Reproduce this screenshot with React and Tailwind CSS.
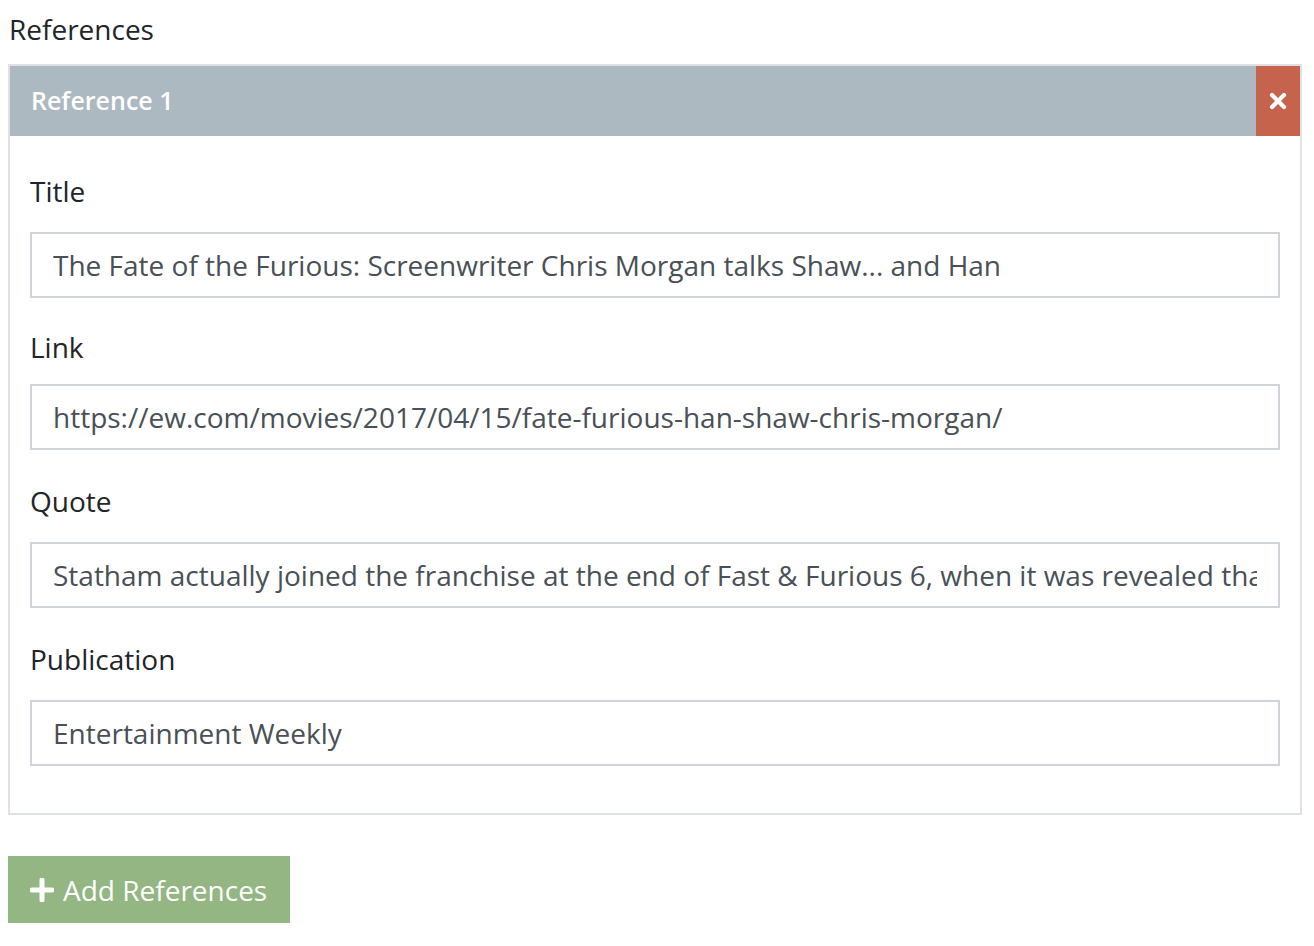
import React from "react";

const font = { fontFamily: '"Open Sans", "Noto Sans", sans-serif' };

function Field({ label, value, mb, labelMb }) {
  return (
    <div className={mb}>
      <div className={"text-[28px] leading-[42px] text-[#212529] " + labelMb}>{label}</div>
      <input
        readOnly
        defaultValue={value}
        className="block w-full h-[66px] border-2 border-[#ced4da] bg-white px-[21px] text-[28px] text-[#495057] outline-none"
        style={font}
      />
    </div>
  );
}

export default function App() {
  return (
    <div className="bg-white min-h-[946px] pl-[8px] pr-[12px] pt-[8px]" style={font}>
      <div className="text-[28px] leading-[42px] text-[#212529] pl-[1px] mb-[14px]">References</div>
      <div className="border-2 border-[#dee2e6]">
        <div className="flex h-[70px] bg-[#adb9c1]">
          <div className="flex-1 flex items-center pl-[21px] text-[25px] font-semibold leading-[40px] text-white pb-[3px]">
            Reference 1
          </div>
          <button className="w-[44px] h-full bg-[#c5634d] flex items-center justify-center">
            <svg width="18" height="18" viewBox="0 0 18 18">
              <path d="M3 3 L15 15 M15 3 L3 15" stroke="white" strokeWidth="4.2" strokeLinecap="round" />
            </svg>
          </button>
        </div>
        <div className="px-[20px] pt-[34px] pb-[19px]">
          <Field mb="mb-[28px]" labelMb="mb-[20px]" label="Title" value="The Fate of the Furious: Screenwriter Chris Morgan talks Shaw... and Han" />
          <Field mb="mb-[30px]" labelMb="mb-[16px]" label="Link" value="https://ew.com/movies/2017/04/15/fate-furious-han-shaw-chris-morgan/" />
          <Field
            mb="mb-[30px]"
            labelMb="mb-[20px]"
            label="Quote"
            value="Statham actually joined the franchise at the end of Fast & Furious 6, when it was revealed that Shaw was the older brother of Owen Shaw"
          />
          <Field mb="mb-[28px]" labelMb="mb-[20px]" label="Publication" value="Entertainment Weekly" />
        </div>
      </div>
      <button className="mt-[41px] h-[67px] w-[282px] bg-[#93b683] flex items-center pl-[22px] text-white text-[28px] leading-[42px]">
        <svg width="24" height="24" viewBox="0 0 24 24" className="mr-[9px]">
          <path d="M12 2 V22 M2 12 H22" stroke="white" strokeWidth="5" strokeLinecap="round" />
        </svg>
        Add References
      </button>
    </div>
  );
}
